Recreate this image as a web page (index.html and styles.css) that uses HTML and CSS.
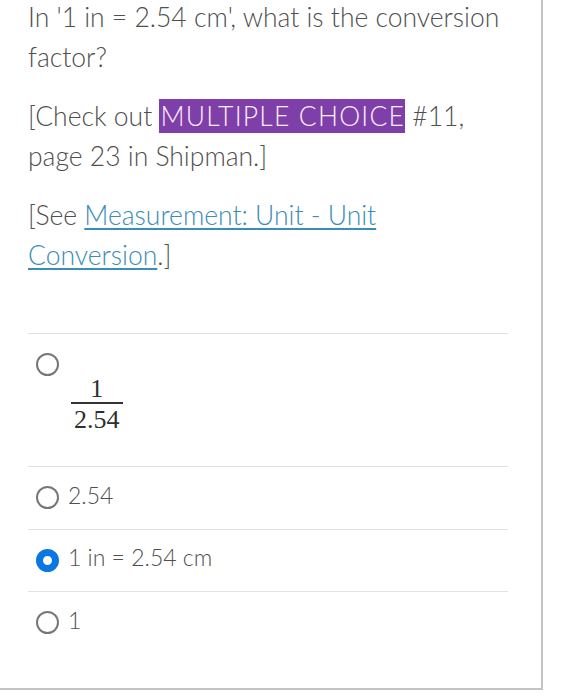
FILE: index.html
```html
<!DOCTYPE html>
<html lang="en">
<head>
<meta charset="utf-8">
<title>Question</title>
<link rel="stylesheet" href="styles.css">
</head>
<body>
<div class="card">
  <div class="question">
    <p>In '1 in = 2.54 cm', what is the conversion factor?</p>
    <p>[Check out <span class="hl">MULTIPLE CHOICE</span> #11, page 23 in Shipman.]</p>
    <p>[See <a class="link" href="#">Measurement: Unit - Unit Conversion</a>.]</p>
  </div>
  <div class="answers">
    <label class="answer answer-math">
      <span class="radio"></span>
      <span class="frac">
        <span class="num">1</span>
        <span class="den">2.54</span>
      </span>
    </label>
    <label class="answer">
      <span class="radio"></span>
      <span class="answer-text">2.54</span>
    </label>
    <label class="answer">
      <span class="radio checked"></span>
      <span class="answer-text">1 in = 2.54 cm</span>
    </label>
    <label class="answer">
      <span class="radio"></span>
      <span class="answer-text">1</span>
    </label>
  </div>
</div>
</body>
</html>
```
FILE: styles.css
```css
html, body {
  margin: 0;
  padding: 0;
  background: #ffffff;
}

body {
  font-family: Lato, "Open Sans", "Liberation Sans", sans-serif;
  font-weight: 300;
  color: #4f4f4f;
}

.card {
  width: 543px;
  box-sizing: border-box;
  padding: 0 33px 34px 28px;
  border-right: 2px solid #c4c4c4;
  border-bottom: 2px solid #c4c4c4;
}

.question {
  margin-top: -2px;
  max-width: 474px;
  font-size: 26.5px;
  line-height: 39.5px;
}

.question p {
  margin: 0 0 20px;
}

.question p:last-child {
  margin-bottom: 0;
}

.hl {
  background: #7f3fa9;
  color: #fbeefb;
  letter-spacing: 1.2px;
  padding: 1px 0 1px 1px;
}

.link {
  color: #3a8db5;
  text-decoration: underline;
  text-decoration-thickness: 1.5px;
  text-underline-offset: 3px;
}

.answers {
  margin-top: 58px;
}

.answer {
  display: flex;
  align-items: center;
  gap: 9px;
  height: 62.5px;
  box-sizing: border-box;
  border-top: 1.5px solid #e2e2e2;
  font-size: 23px;
}

.answer-text {
  padding-bottom: 6px;
}

.answer-math {
  height: 133px;
  align-items: flex-start;
  padding-top: 19px;
  gap: 12px;
}

.radio {
  flex: none;
  width: 23px;
  height: 23px;
  box-sizing: border-box;
  border: 2.5px solid #777777;
  border-radius: 50%;
  margin-left: 8px;
  background: #fff;
}

.radio.checked {
  border: 7.5px solid #0b77e3;
}

.frac {
  display: inline-flex;
  flex-direction: column;
  align-items: stretch;
  margin-top: 25px;
  font-family: "Liberation Serif", "DejaVu Serif", serif;
  font-size: 26px;
  font-weight: 400;
  color: #2f2f2f;
  text-align: center;
}

.num {
  line-height: 22px;
  padding: 0 4px 2px;
  border-bottom: 2px solid #333;
}

.den {
  line-height: 22px;
  padding: 5px 3px 0;
}
```
